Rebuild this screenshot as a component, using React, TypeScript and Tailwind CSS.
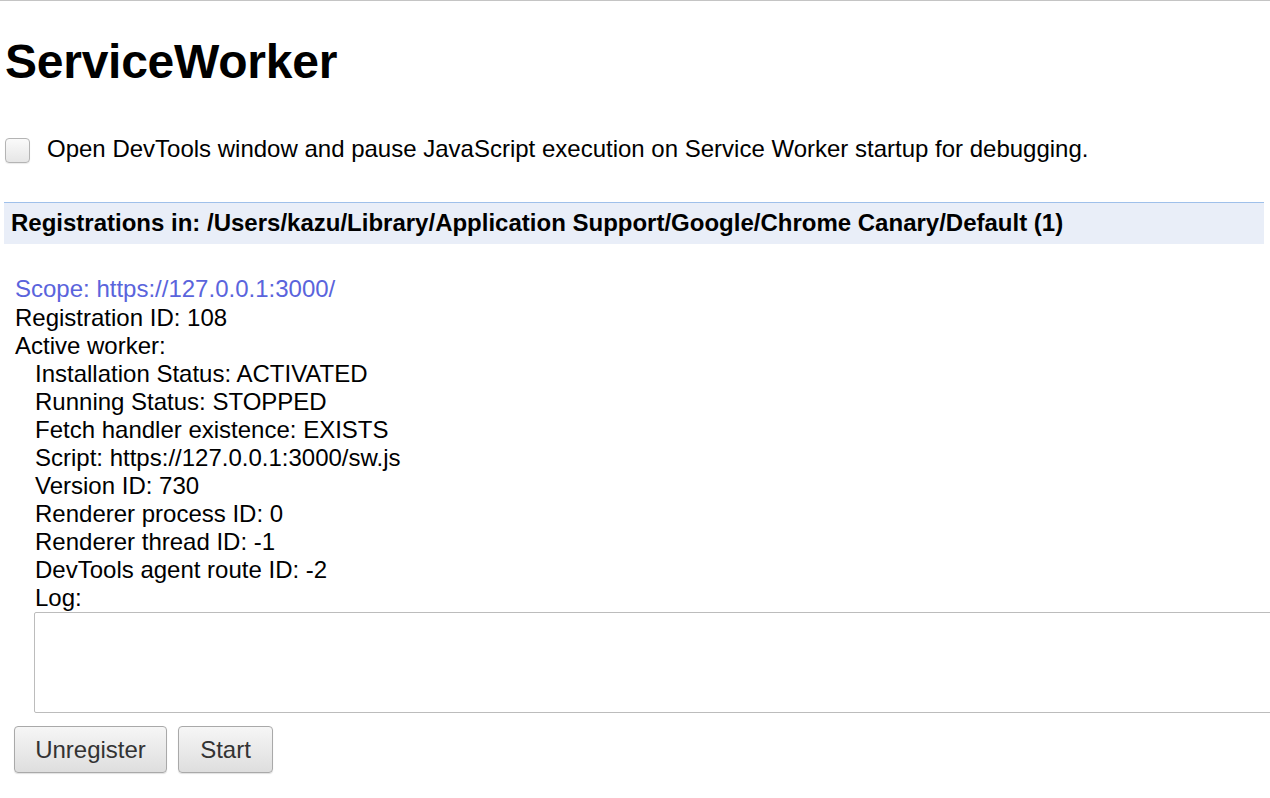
import React from "react";

const details: string[] = [
	"Installation Status: ACTIVATED",
	"Running Status: STOPPED",
	"Fetch handler existence: EXISTS",
	"Script: https://127.0.0.1:3000/sw.js",
	"Version ID: 730",
	"Renderer process ID: 0",
	"Renderer thread ID: -1",
	"DevTools agent route ID: -2",
];

const Btn = ({ label, w }: { label: string; w: string }) => (
	<button
		className={`${w} h-[47px] rounded-[4px] border border-[#a9a9a9] bg-gradient-to-b from-[#f6f6f6] to-[#dedede] text-[24px] leading-[28px] text-[#333] shadow-[0_1px_1px_rgba(0,0,0,0.12)]`}
	>
		{label}
	</button>
);

export default function App() {
	return (
		<div className="w-full min-h-screen overflow-hidden bg-white border-t border-[#c4c4c4] font-['Liberation_Sans',Arial,sans-serif] text-black">
			{/* Title */}
			<h1 className="mt-[33px] ml-[5px] text-[48px] leading-[56px] font-bold tracking-[-0.25px]">
				ServiceWorker
			</h1>

			{/* Debug option */}
			<div className="mt-[45px] ml-[5px] flex items-start gap-[17px]">
				<span className="mt-[3px] w-[25px] h-[25px] shrink-0 rounded-[4px] border border-[#b4b4b4] bg-gradient-to-b from-[#fafafa] to-[#e6e6e6] shadow-[0_1px_1px_rgba(0,0,0,0.08)]" />
				<span className="text-[24px] leading-[28px]">
					Open DevTools window and pause JavaScript execution on Service Worker
					startup for debugging.
				</span>
			</div>

			{/* Registrations header */}
			<div className="mt-[39px] ml-[4px] w-[1260px] border-t border-[#9fc0ea] bg-[#e9eef8] pl-[7px] pt-[6px] pb-[6px]">
				<span className="text-[24px] leading-[28px] font-bold whitespace-nowrap">
					Registrations in: /Users/kazu/Library/Application Support/Google/Chrome
					Canary/Default (1)
				</span>
			</div>

			{/* Registration */}
			<div className="mt-[29px] ml-[15px] text-[24px]">
				<div className="leading-[31px] text-[#5a64dc]">
					Scope: https://127.0.0.1:3000/
				</div>
				<div className="leading-[28px]">Registration ID: 108</div>
				<div className="leading-[28px]">Active worker:</div>
				<div className="ml-[20px] leading-[28px]">
					{details.map((d) => (
						<div key={d}>{d}</div>
					))}
					<div>Log:</div>
				</div>
			</div>
			<div className="ml-[34px] w-[1260px] h-[101px] rounded-[2px] border border-[#bcbcbc] bg-white" />

			{/* Actions */}
			<div className="mt-[13px] ml-[14px] flex gap-[11px]">
				<Btn label="Unregister" w="w-[153px]" />
				<Btn label="Start" w="w-[95px]" />
			</div>
		</div>
	);
}
